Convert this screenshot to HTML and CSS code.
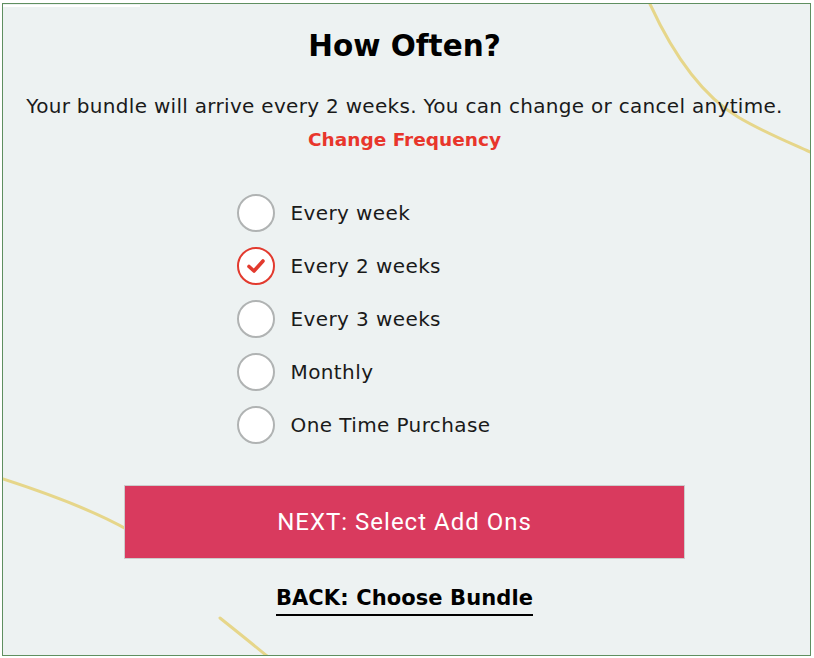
FILE: index.html
```html
<!DOCTYPE html>
<html>
<head>
<meta charset="utf-8">
<link rel="stylesheet" href="styles.css">
</head>
<body>
<div class="frame">
  <div class="topbar"></div>
  <svg class="deco" width="807" height="652" viewBox="0 0 807 652">
    <path d="M647 0 C 670 50, 700 92, 735 113 C 760 128, 790 140, 807 148" />
    <path d="M0 475 C 40 488, 90 506, 125 526" />
    <path d="M217 614 C 237 630, 252 642, 264 652" />
  </svg>
  <main class="content">
    <h1 class="title">How Often?</h1>
    <p class="lead">Your bundle will arrive every 2 weeks. You can change or cancel anytime.</p>
    <a class="change">Change Frequency</a>
    <ul class="options">
      <li class="option"><span class="radio"></span><span class="label">Every week</span></li>
      <li class="option checked"><span class="radio"><svg width="20" height="16" viewBox="0 0 20 16"><path d="M3 8.5 L8 13 L17 3" /></svg></span><span class="label">Every 2 weeks</span></li>
      <li class="option"><span class="radio"></span><span class="label">Every 3 weeks</span></li>
      <li class="option"><span class="radio"></span><span class="label">Monthly</span></li>
      <li class="option"><span class="radio"></span><span class="label">One Time Purchase</span></li>
    </ul>
    <button class="next">NEXT: Select Add Ons</button>
    <a class="back">BACK: Choose Bundle</a>
  </main>
</div>
</body>
</html>
```
FILE: styles.css
```css
* { box-sizing: border-box; }
html, body { margin: 0; padding: 0; background: #ffffff; }
body { padding: 3px 0 0 2px; }
.frame {
  position: relative;
  width: 809px;
  height: 653px;
  background: #edf2f2;
  border: 1px solid #5f8f60;
  box-shadow: 0 2px 0 #a7aba7;
  overflow: hidden;
}
.topbar {
  position: absolute;
  left: 0; top: 1px;
  width: 137px; height: 2px;
  background: #ffffff;
}
.deco {
  position: absolute;
  left: 0; top: 0;
}
.deco path {
  fill: none;
  stroke: #e6d68a;
  stroke-width: 3;
  stroke-linecap: round;
}
.content {
  position: relative;
  display: flex;
  flex-direction: column;
  align-items: center;
  padding-right: 4px;
  font-family: "DejaVu Sans", sans-serif;
  color: #1a1a1a;
}
.title {
  margin: 25px 0 0;
  font-family: "DejaVu Sans", sans-serif;
  font-weight: 700;
  font-size: 29.5px;
  line-height: 34px;
  color: #000;
}
.lead {
  margin: 30px 0 0;
  font-size: 20px;
  line-height: 26px;
  letter-spacing: 0.3px;
  white-space: nowrap;
}
.change {
  margin-top: 8px;
  font-weight: 700;
  font-size: 18.5px;
  line-height: 26px;
  color: #e8362c;
}
.options {
  list-style: none;
  margin: 41px 0 0;
  padding: 0;
  width: 336px;
  display: flex;
  flex-direction: column;
  gap: 15px;
}
.option {
  display: flex;
  align-items: center;
  height: 38px;
}
.radio {
  width: 38px;
  height: 38px;
  border-radius: 50%;
  background: #fff;
  border: 2px solid #b0b3b3;
  display: flex;
  align-items: center;
  justify-content: center;
  flex: none;
}
.checked .radio { border-color: #e23a2e; }
.radio path {
  fill: none;
  stroke: #e23a2e;
  stroke-width: 3.6;
  stroke-linecap: round;
  stroke-linejoin: round;
}
.label {
  margin-left: 16px;
  font-size: 20px;
  letter-spacing: 0.4px;
  color: #1a1a1a;
}
.next {
  margin-top: 41px;
  width: 561px;
  height: 74px;
  background: #d93a5e;
  border: 1px solid #ccc;
  color: #fff;
  font-family: "Roboto", "Liberation Sans", sans-serif;
  font-size: 24px;
  font-weight: 400;
  letter-spacing: 1px;
}
.back {
  margin-top: 25px;
  font-weight: 700;
  font-size: 21px;
  line-height: 28px;
  color: #000;
  padding-bottom: 2px;
  border-bottom: 2px solid #000;
  letter-spacing: 0.1px;
}
```
